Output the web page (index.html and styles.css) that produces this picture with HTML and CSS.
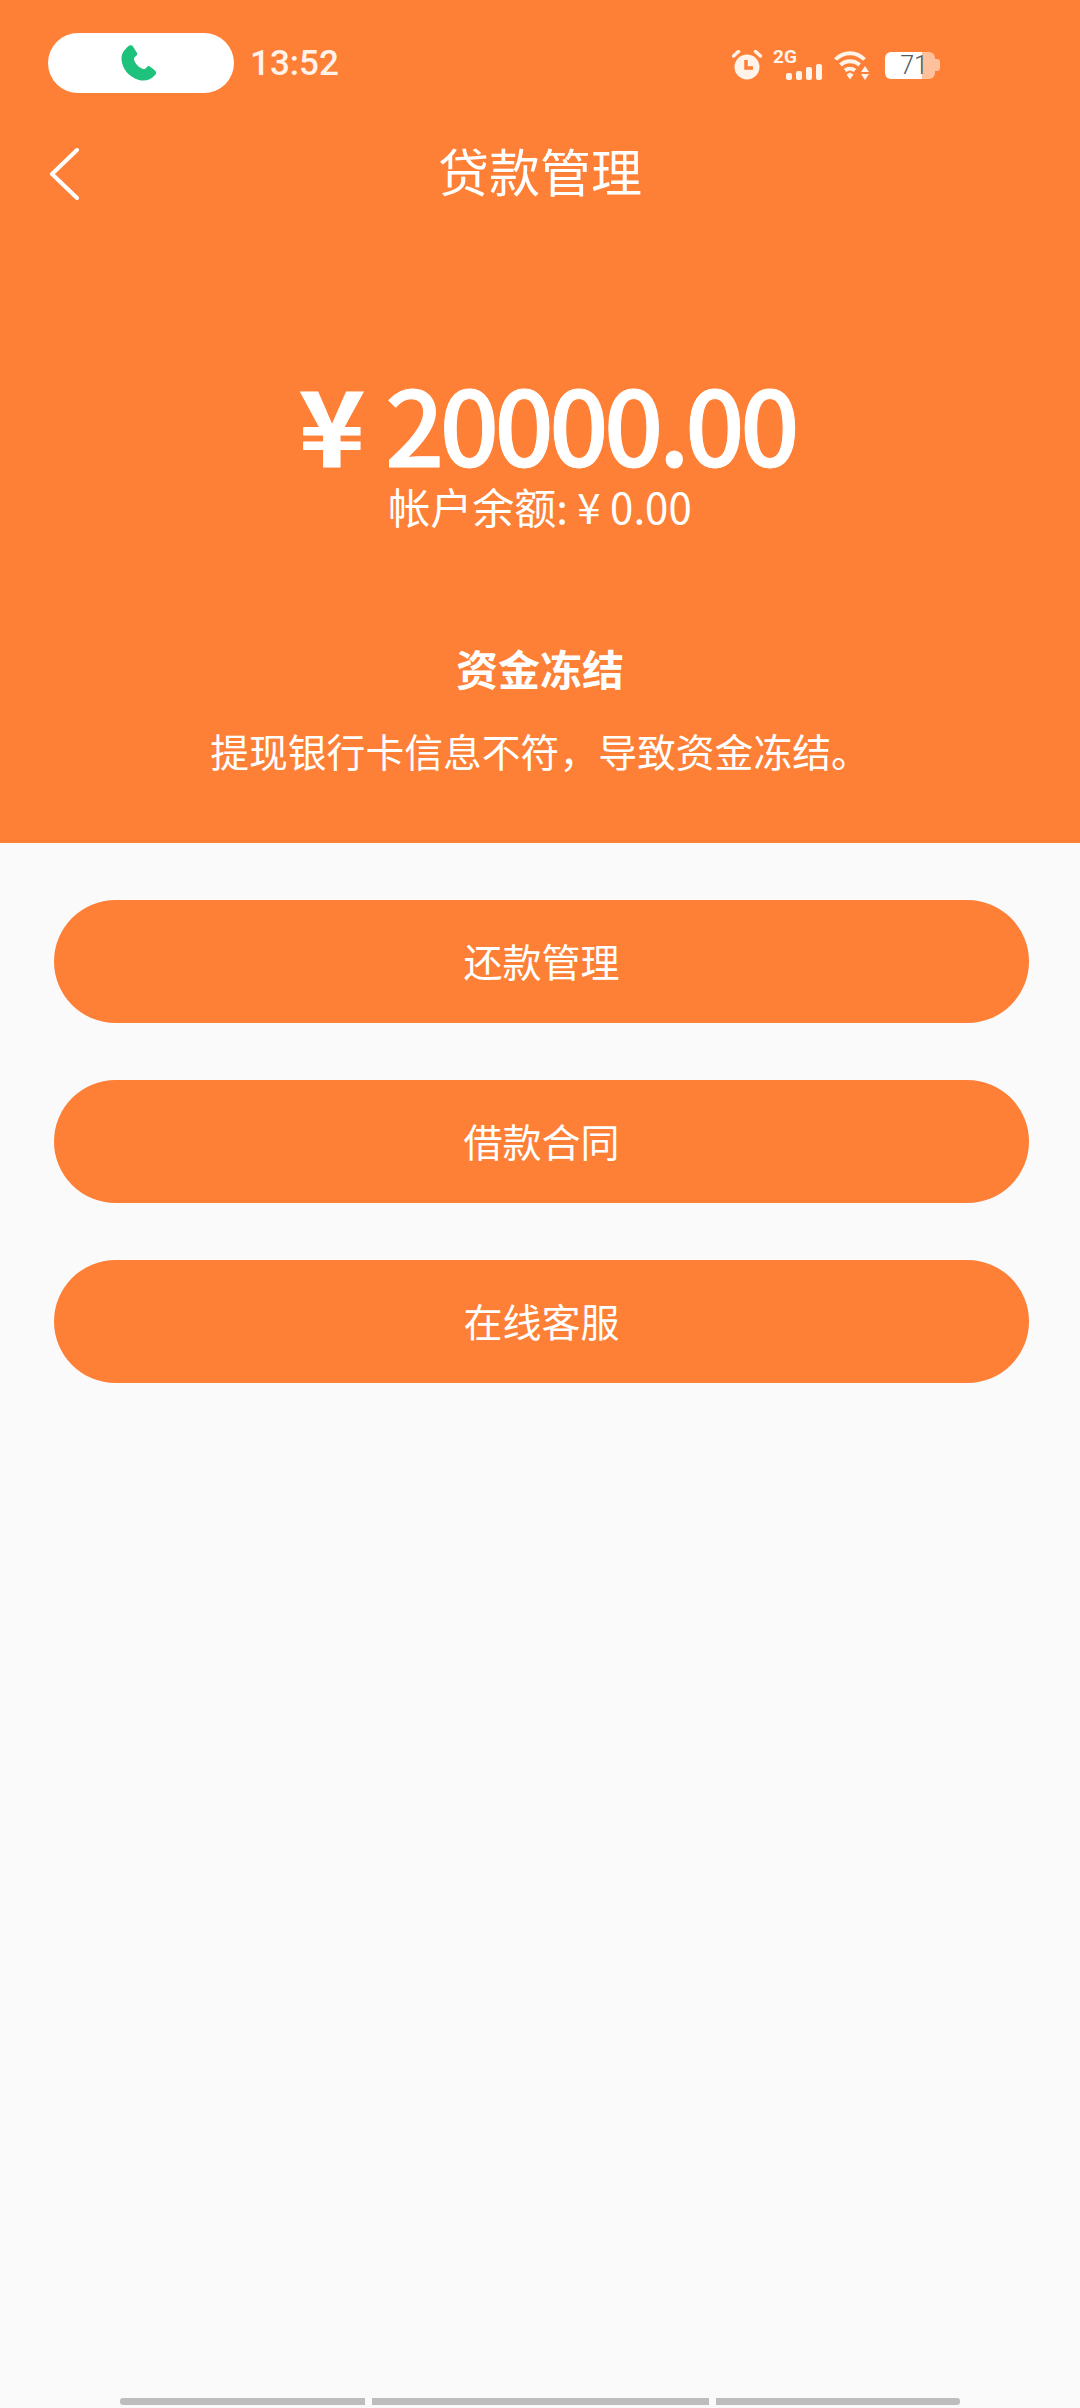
FILE: index.html
```html
<!DOCTYPE html>
<html lang="zh">
<head>
<meta charset="utf-8">
<title>贷款管理</title>
<link rel="stylesheet" href="styles.css">
</head>
<body>
<div class="page">
  <header class="hero">
    <div class="status">
      <div class="call-pill">
        <svg class="call-icon" viewBox="0 0 36 36"><path d="M7 1.500C8.500-.2 11 0 12 1.500L16 8C16.800 9.500 16 10.500 14.500 11.500 13 12.500 12.500 14 13.500 16 15 19.500 17.500 22 21 23.500 23 24.500 24.500 24 25.500 22.500 26.500 21 27.500 20.500 29 21.500L34 25.500C35.500 27 35.500 28.500 34 30 30 35 24 36.500 18 35 8 32 1 24 .5 14 .3 9 3 5 7 1.500Z"/></svg>
      </div>
      <span class="clock">13:52</span>
      <div class="status-icons">
        <svg class="alarm" viewBox="0 0 30 30"><circle cx="15" cy="17" r="12.500"/><path class="ear" d="M1.500 6l5-4.500M28.500 6l-5-4.500"/><path class="hand" d="M14 10v8h7"/></svg>
        <div class="signal">
          <span class="net">2G</span>
          <div class="bars"><i class="b1"></i><i class="b2"></i><i class="b3"></i><i class="b4"></i></div>
        </div>
        <svg class="wifi" viewBox="0 0 36 30"><path class="arc" d="M1.500 9.500c8-8.500 21-8.500 29 0M6.500 15c5-5 14-5 19 0M11 20.500c3-2.500 7-2.500 10 0"/><path class="fill" d="M12.500 24.500l3.500-2 3.500 2-3.500 5zM31 16l4 6h-8zM27 24h8l-4 6z"/></svg>
        <div class="battery">
          <div class="cell"><span class="level">71</span></div>
          <span class="cap"></span>
        </div>
      </div>
    </div>
    <nav class="nav">
      <svg class="back" viewBox="0 0 30 52"><path d="M28 2L3 26l25 24"/></svg>
      <h1 class="title">贷款管理</h1>
    </nav>
    <div class="amount"><span class="yen">¥</span>20000.00</div>
    <div class="balance">帐户余额: ¥ 0.00</div>
    <h2 class="state">资金冻结</h2>
    <p class="reason">提现银行卡信息不符，导致资金冻结。</p>
  </header>
  <main class="actions">
    <button class="action">还款管理</button>
    <button class="action">借款合同</button>
    <button class="action">在线客服</button>
  </main>
  <div class="gesture"><i class="seg-a"></i><i class="seg-b"></i><i class="seg-c"></i></div>
</div>
</body>
</html>
```
FILE: styles.css
```css
* { box-sizing: border-box; }
html, body { margin: 0; padding: 0; }
body { width: 1080px; height: 2408px; background: #fafafa; font-family: "Noto Sans CJK SC", "Noto Sans", sans-serif; color: #fff; overflow: hidden; }
.page { height: 2408px; display: flex; flex-direction: column; }
.hero { height: 843px; background: #fe7f36; display: flex; flex-direction: column; align-items: center; }
.status { width: 100%; height: 60px; margin-top: 33px; padding: 0 140px 0 48px; display: flex; align-items: center; }
.call-pill { width: 186px; height: 60px; border-radius: 30px; background: #fff; display: flex; align-items: center; justify-content: center; padding-right: 4px; }
.call-icon { width: 36px; height: 36px; fill: #1fc27c; }
.clock { margin: 2px 0 0 16px; font: 500 35px/60px Roboto, sans-serif; color: #fff3ea; }
.status-icons { margin-left: auto; display: flex; align-items: center; height: 32px; margin-top: 4px; }
.alarm { width: 30px; height: 30px; margin-right: 11px; }
.alarm circle { fill: #fff3ea; }
.alarm .ear { fill: none; stroke: #fff3ea; stroke-width: 3.500; stroke-linecap: round; }
.alarm .hand { fill: none; stroke: #fe7f36; stroke-width: 3.500; }
.signal { width: 49px; height: 30px; margin-right: 12px; position: relative; }
.net { position: absolute; left: 0; top: -2px; font: 700 19px/18px Roboto, sans-serif; color: #fff3ea; }
.bars { position: absolute; right: 0; bottom: 0; display: flex; align-items: flex-end; gap: 4px; }
.bars i { width: 6px; background: #fff3ea; border-radius: 2px; }
.bars .b1 { height: 7px; }
.bars .b2 { height: 9px; }
.bars .b3 { height: 13px; }
.bars .b4 { height: 16px; }
.wifi { width: 36px; height: 30px; margin-right: 15px; }
.wifi .arc { fill: none; stroke: #fff3ea; stroke-width: 4; }
.wifi .fill { fill: #fff3ea; }
.battery { display: flex; align-items: center; }
.cell { width: 50px; height: 27px; border-radius: 6px; background: linear-gradient(90deg, #fff 74%, #ffc19c 74%); display: flex; align-items: center; justify-content: center; padding-left: 8px; }
.level { font: 300 25px/27px Roboto, sans-serif; color: #555a66; }
.cap { width: 5px; height: 12px; background: #ffc19c; border-radius: 0 3px 3px 0; }
.nav { width: 100%; height: 70px; margin-top: 42px; padding-left: 49px; display: flex; align-items: center; position: relative; }
.back { width: 30px; height: 52px; margin-top: 7px; fill: none; stroke: #fff; stroke-width: 4; stroke-linecap: round; stroke-linejoin: round; }
.title { position: absolute; left: 0; right: 0; top: 0; margin: 0; text-align: center; font-size: 51px; line-height: 70px; font-weight: 400; }
.amount { margin: 161px 0 0 16px; font-size: 104px; line-height: 112px; font-weight: 500; letter-spacing: -4.500px; -webkit-text-stroke: 1px #fff; }
.yen { display: inline-block; margin-right: 27px; transform: scaleX(1.08); font-weight: 700; }
.balance { font-size: 42px; line-height: 56px; font-weight: 400; }
.state { margin: 104px 0 0; font-size: 42px; line-height: 60px; font-weight: 700; }
.reason { margin: 24px 0 0; font-size: 38.800px; line-height: 56px; font-weight: 400; }
.actions { padding: 57px 51px 0 54px; display: flex; flex-direction: column; gap: 57px; }
.action { height: 123px; border: 0; border-radius: 62px; background: #fe7f36; color: #fff; font: 400 39px/54px "Noto Sans CJK SC", sans-serif; padding: 0 0 4px; }
.gesture { margin: auto 120px 3px; height: 7px; display: flex; gap: 7px; }
.gesture i { background: #bdbdbd; }
.seg-a { width: 245px; border-radius: 3px 0 0 3px; }
.seg-b { width: 337px; }
.seg-c { width: 244px; border-radius: 0 3px 3px 0; }
```
